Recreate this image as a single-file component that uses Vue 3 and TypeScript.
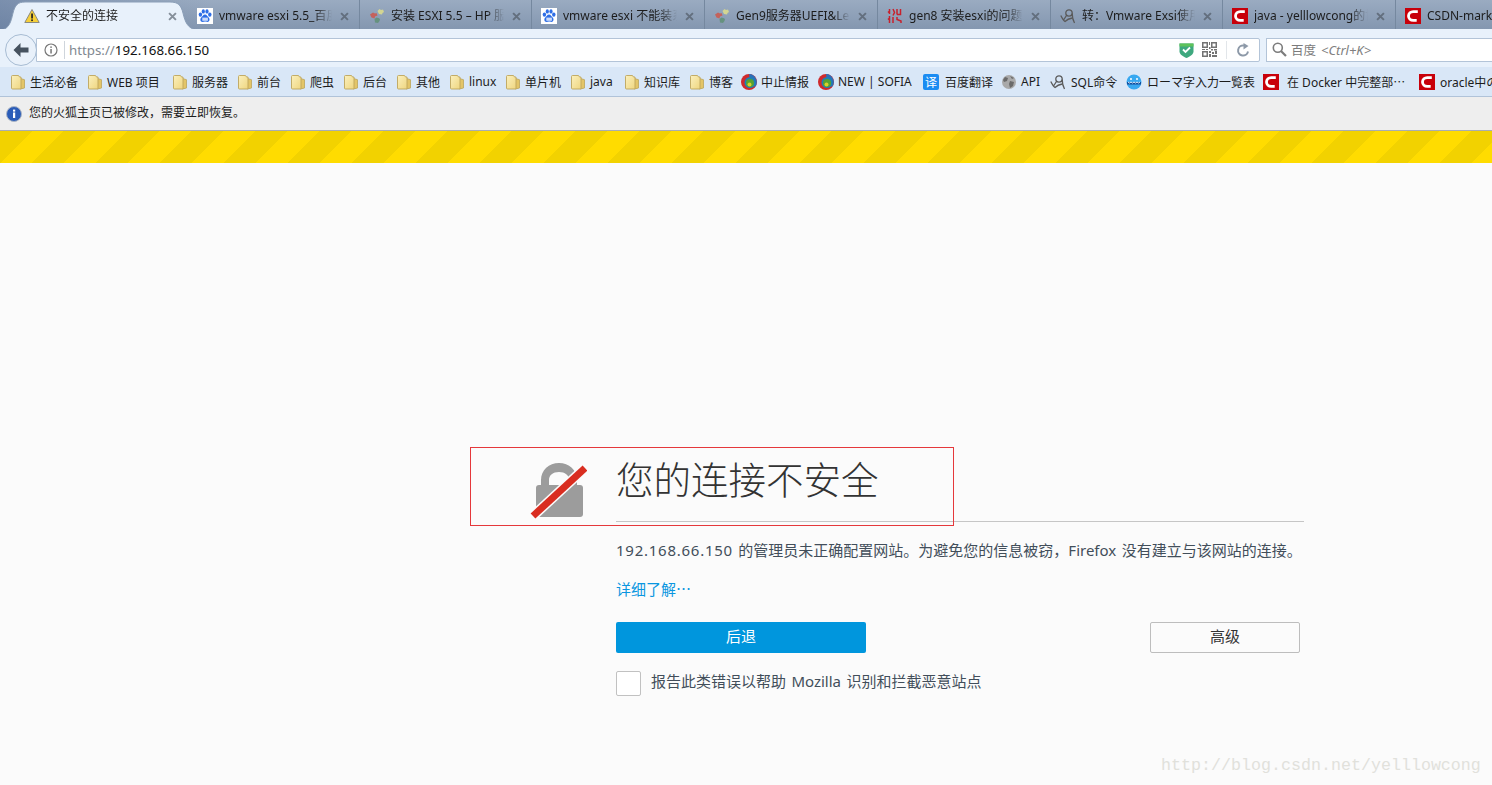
<script setup lang="ts">
interface Tab { icon: string; text: string; width: number }
interface Mark { icon: string; text: string; width: number; gap?: number }

const tabs: Tab[] = [
  { icon: 'baidu', text: 'vmware esxi 5.5_百度搜索', width: 170 },
  { icon: 'puzzle', text: '安装 ESXI 5.5 – HP 服务器', width: 172 },
  { icon: 'baidu', text: 'vmware esxi 不能装系统', width: 173 },
  { icon: 'puzzle', text: 'Gen9服务器UEFI&Legacy', width: 173 },
  { icon: 'redlogo', text: 'gen8 安装esxi的问题解决', width: 173 },
  { icon: 'ink', text: '转：Vmware Exsi使用教程', width: 172 },
  { icon: 'csdn', text: 'java - yelllowcong的博客', width: 173 },
  { icon: 'csdn', text: 'CSDN-markdown编辑器', width: 173 },
]

const marks: Mark[] = [
  { icon: 'folder', text: '生活必备', width: 77 },
  { icon: 'folder', text: 'WEB 项目', width: 85 },
  { icon: 'folder', text: '服务器', width: 65 },
  { icon: 'folder', text: '前台', width: 53 },
  { icon: 'folder', text: '爬虫', width: 53 },
  { icon: 'folder', text: '后台', width: 53 },
  { icon: 'folder', text: '其他', width: 53 },
  { icon: 'folder', text: 'linux', width: 56 },
  { icon: 'folder', text: '单片机', width: 65 },
  { icon: 'folder', text: 'java', width: 54 },
  { icon: 'folder', text: '知识库', width: 65 },
  { icon: 'folder', text: '博客', width: 52 },
  { icon: 'ring', text: '中止情报', width: 77 },
  { icon: 'ring', text: 'NEW | SOFIA', width: 105 },
  { icon: 'trans', text: '百度翻译', width: 78, gap: 6 },
  { icon: 'globe', text: 'API', width: 49 },
  { icon: 'ink', text: 'SQL命令', width: 76, gap: 5 },
  { icon: 'ball', text: 'ローマ字入力一覧表', width: 137, gap: 5 },
  { icon: 'csdn', text: '在 Docker 中完整部⋯', width: 156, gap: 8 },
  { icon: 'csdn', text: 'oracle中の', width: 90, gap: 5 },
]
</script>

<template>
  <div class="window">
    <svg class="defs" width="0" height="0" aria-hidden="true">
      <defs>
        <linearGradient id="fold" x1="0" y1="0" x2="1" y2="1">
          <stop offset="0" stop-color="#fbf0bd" />
          <stop offset="1" stop-color="#efd680" />
        </linearGradient>
        <symbol id="folder" viewBox="0 0 16 16">
          <path d="M10.500 4.500l4 1.200v8.300l-4 1z" fill="#e3c568" stroke="#bda55b" stroke-width=".8" />
          <path d="M1.500 2.500a1 1 0 0 1 1-1h6l1 1.500h1.500v12H2.500a1 1 0 0 1-1-1z" fill="url(#fold)" stroke="#bda55b" stroke-width=".9" />
        </symbol>
        <symbol id="baidu" viewBox="0 0 16 16">
          <rect width="16" height="16" fill="#fff" />
          <g fill="#2e6ee6">
            <ellipse cx="3.400" cy="6.600" rx="1.700" ry="2.200" />
            <ellipse cx="6.300" cy="3.400" rx="1.600" ry="2.200" />
            <ellipse cx="10" cy="3.400" rx="1.600" ry="2.200" />
            <ellipse cx="12.800" cy="6.600" rx="1.700" ry="2.200" />
            <path d="M8 6.600c2 0 2.300 2 3.600 3 1.600 1.300 1.100 4.400-1.300 4.400-1 0-1.500-.4-2.300-.4s-1.400.4-2.400.4c-2.400 0-2.900-3-1.300-4.400 1.400-1 1.600-3 3.700-3z" />
          </g>
          <rect x="5.300" y="9.600" width="5.600" height="3.200" fill="#fff" opacity=".75" />
        </symbol>
        <symbol id="puzzle" viewBox="0 0 16 16">
          <path d="M1 6.500l3-2 2 1 1.500-.5 1 2.500-2.500 1-.5 2-3-1z" fill="#c4625c" />
          <path d="M8.500 3l2-2 1.500 1 2-.5 1 2.500-1.500 1-.5 1.500-3-.5z" fill="#d3d592" />
          <path d="M5.500 11l2-1.500 2 .5 1.500 1-.5 2-1.500 2-3-.5z" fill="#66927f" />
        </symbol>
        <symbol id="redlogo" viewBox="0 0 16 16">
          <g fill="none" stroke="#c8202c" stroke-width="1.500">
            <path d="M2.500 1v5M1 3.500l1.500 1.500M2.500 8v7M1 10.500l1.500 1.500" />
            <path d="M6 1l1.500 3.500L6 7.500M6 9v6" />
            <path d="M10 1v5.500M13.500 1v5.500h-3.500M10 9v2.500l4 1.500v2" />
          </g>
        </symbol>
        <symbol id="ink" viewBox="0 0 16 16">
          <g fill="none" stroke="#5a5a5a" stroke-width="1.300">
            <circle cx="9" cy="5" r="3.200" />
            <path d="M12.200 5.500c0 3 .3 6 2.300 9.500" />
            <path d="M.8 7.500c1 2 2.500 5 4.200 6 2-2 4-3 7.200-3.500" />
            <path d="M6.500 7.500L3.500 12" />
          </g>
        </symbol>
        <symbol id="csdn" viewBox="0 0 16 16">
          <rect width="16" height="16" fill="#c8000a" />
          <path d="M12.800 3.600H8.300C5.600 3.600 3.500 5.500 3.500 8s2.100 4.400 4.800 4.400h3.400" fill="none" stroke="#fff" stroke-width="2.800" />
        </symbol>
        <symbol id="ring" viewBox="0 0 16 16">
          <circle cx="8" cy="8" r="8" fill="#cf2a2c" />
          <path d="M8 0a8 8 0 0 1 6 13L9 8z" fill="#2d6fb8" />
          <circle cx="9" cy="8.500" r="5.500" fill="#1f7fb4" />
          <circle cx="9" cy="9" r="4" fill="#57a232" />
          <circle cx="8.500" cy="10.500" r="2" fill="#d8d02c" />
        </symbol>
        <symbol id="trans" viewBox="0 0 16 16">
          <rect width="16" height="16" rx="2" fill="#1b8cf2" />
          <text x="8" y="12.500" font-size="12" text-anchor="middle" fill="#fff" font-family="'Noto Sans CJK SC', sans-serif">译</text>
        </symbol>
        <symbol id="globe" viewBox="0 0 16 16">
          <circle cx="8" cy="8" r="7" fill="#a9a9a9" />
          <path d="M4 3l3 1-1 3-3 1-1-2zM9 7l4 1-1 4-3 2-1-4zM9 2l4 2-2 1z" fill="#6a6a6a" />
        </symbol>
        <symbol id="ball" viewBox="0 0 16 16">
          <circle cx="8" cy="8" r="7.500" fill="#38a8f0" />
          <path d="M1 8h14v2.500H1z" fill="#124f9e" />
          <path d="M2 8l1.500 1 1.500-1 1.500 1 1.500-1 1.500 1 1.500-1 1.500 1 1.500-1" stroke="#dff1ff" fill="none" />
          <circle cx="5" cy="5" r="1" fill="#fff" />
          <circle cx="11" cy="5" r="1" fill="#fff" />
        </symbol>
        <symbol id="x" viewBox="0 0 10 10">
          <path d="M1.200 1.200l7.600 7.600M8.800 1.200L1.200 8.800" stroke="currentColor" stroke-width="2.200" fill="none" />
        </symbol>
      </defs>
    </svg>

    <div class="tabbar">
      <div class="tab active">
        <svg class="tab-shape" width="198" height="30" viewBox="0 0 198 30" aria-hidden="true">
          <path d="M1 30c8-1 10-8 12-17C15 5 18 2 25 2h145c8 0 11 3 13 11 2 9 5 16 14 17z" fill="#e8f1fb" stroke="#8a9eb7" />
        </svg>
        <svg class="ic warn" width="16" height="16" viewBox="0 0 16 16">
          <path d="M8 1.500L15.200 14.500H.8z" fill="#f6cf38" stroke="#8a8a80" stroke-linejoin="round" />
          <rect x="7.200" y="5.500" width="1.700" height="5" fill="#222" />
          <rect x="7.200" y="11.400" width="1.700" height="1.700" fill="#222" />
        </svg>
        <span class="tab-title">不安全的连接</span>
        <svg class="close" width="9" height="9"><use href="#x" /></svg>
      </div>
      <div v-for="t in tabs" :key="t.text" class="tab" :style="{ width: t.width + 'px' }">
        <svg class="ic" width="16" height="16"><use :href="'#' + t.icon" /></svg>
        <span class="tab-title">{{ t.text }}</span>
        <svg class="close" width="9" height="9"><use href="#x" /></svg>
      </div>
    </div>

    <div class="navbar">
      <div class="urlbar">
        <svg class="info" width="14" height="14" viewBox="0 0 14 14">
          <circle cx="7" cy="7" r="6" fill="none" stroke="#777" stroke-width="1.200" />
          <rect x="6.300" y="6" width="1.500" height="4.500" fill="#777" />
          <rect x="6.300" y="3.400" width="1.500" height="1.500" fill="#777" />
        </svg>
        <span class="sep"></span>
        <span class="url"><span class="scheme">https://</span>192.168.66.150</span>
        <svg class="shield" width="15" height="16" viewBox="0 0 15 16">
          <path d="M.5 1.500h14v8c0 3-3.500 5-7 6.500-3.500-1.500-7-3.500-7-6.500z" fill="#3ea87e" />
          <path d="M.5 1.500h14v3H.5z" fill="#5ec25a" />
          <path d="M4 7.500l2.500 2.500L11 5.500" fill="none" stroke="#fff" stroke-width="1.800" />
        </svg>
        <svg class="qr" width="15" height="15" viewBox="0 0 15 15" fill="#737373">
          <path d="M0 0h6v6H0zM1.500 1.500v3h3v-3zM9 0h6v6H9zM10.500 1.500v3h3v-3zM0 9h6v6H0zM1.500 10.500v3h3v-3z" fill-rule="evenodd" />
          <path d="M7 0h1v3H7zM7 5h1.500v2H7zM0 7h3v1H0zM4 7h2v1H4zM9 7h2v1.500H9zM12 7h3v1.500h-3zM7 9h2v2H7zM10 10h2v2h-2zM13 9h2v3h-2zM7 12h2v3H7zM10 13h5v2h-5z" />
        </svg>
        <span class="sep light"></span>
        <svg class="reload" width="14" height="14" viewBox="0 0 14 14">
          <path d="M12 8.500A5 5 0 1 1 8 2.600" fill="none" stroke="#8d99a8" stroke-width="2" />
          <path d="M7.500 0l5 3-5 3.500z" fill="#8d99a8" />
        </svg>
      </div>
      <div class="backbtn">
        <svg width="16" height="14" viewBox="0 0 16 14">
          <path d="M7.500 0L.5 7l7 7V9.500H15.500v-5H7.500z" fill="#46525f" />
        </svg>
      </div>
      <div class="searchbar">
        <svg width="15" height="15" viewBox="0 0 15 15">
          <circle cx="5.800" cy="5.800" r="4.500" fill="none" stroke="#7c7c7c" stroke-width="1.600" />
          <path d="M9 9l5 5" stroke="#7c7c7c" stroke-width="2.200" />
        </svg>
        <span class="search-name">百度</span>
        <em class="search-key">&lt;Ctrl+K&gt;</em>
      </div>
    </div>

    <div class="bookmarks">
      <div v-for="m in marks" :key="m.text" class="mark" :style="{ width: m.width + 'px', gap: (m.gap ?? 4) + 'px' }">
        <svg class="ic" width="16" height="16"><use :href="'#' + m.icon" /></svg>
        <span>{{ m.text }}</span>
      </div>
    </div>

    <div class="notice">
      <svg class="notice-icon" width="16" height="16" viewBox="0 0 16 16">
        <circle cx="8" cy="8" r="7.500" fill="#2a5cb8" stroke="#aab4c4" />
        <rect x="7" y="6.500" width="2.200" height="5.500" fill="#fff" />
        <rect x="7" y="3.600" width="2.200" height="2" fill="#fff" />
      </svg>
      <span>您的火狐主页已被修改，需要立即恢复。</span>
    </div>

    <div class="stripes"></div>

    <main class="page">
      <div class="error">
        <svg class="lock" width="58" height="58" viewBox="0 0 58 58">
          <path d="M12 26v-8C12 8 20 1 30 1s18 7 18 17v8h-8v-8c0-5-4-8-10-8s-10 3-10 8v8z" fill="#9c9c9c" />
          <rect x="7" y="23" width="47" height="32" rx="3" fill="#9c9c9c" />
          <path d="M56 6L4 54" stroke="#fbfbfb" stroke-width="10" />
          <path d="M56 6L4 54" stroke="#d92d20" stroke-width="7" />
        </svg>
        <div class="content">
          <h1 class="title">您的连接不安全</h1>
          <p class="desc"><span class="ip">192.168.66.150</span> 的管理员未正确配置网站。为避免您的信息被窃，Firefox 没有建立与该网站的连接。</p>
          <a class="more">详细了解⋯</a>
          <div class="actions">
            <button class="btn primary">后退</button>
            <button class="btn plain">高级</button>
          </div>
          <label class="report">
            <span class="check"></span>
            <span class="report-text">报告此类错误以帮助 Mozilla 识别和拦截恶意站点</span>
          </label>
        </div>
      </div>
      <div class="redbox"></div>
      <div class="watermark">http://blog.csdn.net/yelllowcong</div>
    </main>
  </div>
</template>

<style>
html, body { margin: 0; padding: 0; overflow: hidden; }
</style>

<style scoped>
.window {
  width: 1492px;
  height: 785px;
  overflow: hidden;
  display: flex;
  flex-direction: column;
  font-family: "Noto Sans", "Noto Sans CJK SC", sans-serif;
  color: #1c1c1c;
  background: #fbfbfb;
}
.defs { position: absolute; }
.ic { flex: none; }

.tabbar {
  height: 29px;
  flex: none;
  display: flex;
  overflow: hidden;
  background:
    linear-gradient(90deg, rgba(85, 110, 150, .45) 0, rgba(85, 110, 150, 0) 14%),
    linear-gradient(180deg, #9aabc1 0, #8497b0 100%);
  border-bottom: 1px solid #74879f;
}
.tab {
  position: relative;
  flex: none;
  height: 29px;
  box-sizing: border-box;
  display: flex;
  align-items: center;
  gap: 6px;
  padding: 2px 8px 0 9px;
  border-right: 1px solid #75889f;
  font-size: 12px;
  line-height: 16px;
}
.tab:nth-child(2) { padding-left: 7px; }
.tab:last-child { border-right: none; }
.tab.active {
  width: 190px;
  padding-left: 24px;
  padding-right: 11px;
  border-right: none;
  z-index: 1;
}
.tab-shape { position: absolute; left: 0; top: 0; }
.warn, .tab.active .tab-title, .tab.active .close { position: relative; }
.tab-title {
  flex: 1;
  min-width: 0;
  overflow: hidden;
  white-space: nowrap;
  -webkit-mask-image: linear-gradient(90deg, #000 85%, transparent);
  mask-image: linear-gradient(90deg, #000 85%, transparent);
}
.close {
  flex: none;
  margin: 1px 2px 0;
  color: #636f7e;
}
.tab.active .close { color: #858f9a; }

.navbar {
  position: relative;
  flex: none;
  height: 38px;
  display: flex;
  align-items: center;
  gap: 6px;
  padding: 3px 0 0 36px;
  margin-top: -1px;
  background: #e8f1fb;
  box-sizing: border-box;
  z-index: 2;
}
.urlbar {
  flex: none;
  width: 1224px;
  height: 24px;
  box-sizing: border-box;
  display: flex;
  align-items: center;
  background: #fff;
  border: 1px solid #b3c4d8;
  border-radius: 0 2px 2px 0;
  padding-left: 7px;
  font-size: 13.3px;
}
.info { flex: none; }
.sep { flex: none; width: 1px; height: 18px; background: #cfd5dc; margin: 0 4px 0 6px; }
.url { flex: 1; color: #111; white-space: nowrap; }
.scheme { color: #808890; }
.shield { flex: none; margin-right: 8px; }
.qr { flex: none; }
.sep.light { margin: 0 9px 0 9px; background: #e2e6ea; }
.reload { flex: none; margin-right: 9px; }
.backbtn {
  position: absolute;
  left: 5px;
  top: 5px;
  width: 32px;
  height: 32px;
  box-sizing: border-box;
  border: 1px solid #a7bcd3;
  border-radius: 50%;
  background: #e9f1fa;
  display: flex;
  align-items: center;
  justify-content: center;
}
.searchbar {
  flex: none;
  width: 240px;
  height: 24px;
  box-sizing: border-box;
  display: flex;
  align-items: center;
  gap: 4px;
  background: #fff;
  border: 1px solid #b3c4d8;
  padding-left: 5px;
  font-size: 12.5px;
  color: #7b7b7b;
}
.search-key { margin-left: 1px; color: #808080; font-size: 13px; }

.bookmarks {
  flex: none;
  height: 30px;
  box-sizing: border-box;
  display: flex;
  align-items: center;
  padding-left: 10px;
  overflow: hidden;
  background: #d9e7f7;
  border-bottom: 1px solid #b0c3d9;
  font-size: 12px;
  white-space: nowrap;
}
.mark { flex: none; display: flex; align-items: center; }

.notice {
  flex: none;
  height: 34px;
  box-sizing: border-box;
  display: flex;
  align-items: center;
  gap: 7px;
  padding: 0 0 3px 6px;
  background: #eeeeee;
  border-bottom: 1px solid #a9adb2;
  font-size: 12px;
}
.notice-icon { margin-top: 4px; }
.stripes {
  flex: none;
  height: 32px;
  background: repeating-linear-gradient(135deg, #f2d200 0, #f2d200 22.63px, #ffdc00 22.63px, #ffdc00 45.25px);
}

.page {
  position: relative;
  flex: 1;
  min-height: 0;
  background: #fbfbfb;
}
.error {
  display: grid;
  grid-template-columns: 58px 688px;
  column-gap: 29px;
  padding: 290px 0 0 529px;
  align-items: start;
  color: #424e5a;
}
.lock { margin-top: 9px; }
.title {
  margin: -3px 0 0;
  height: 72px;
  box-sizing: border-box;
  font-weight: 300;
  font-size: 37.5px;
  line-height: 56px;
  color: #333;
  border-bottom: 1px solid #c6c6c6;
  font-family: "Noto Sans CJK SC", "Noto Sans", sans-serif;
  white-space: nowrap;
}
.desc {
  margin: 17px 0 0;
  font-size: 15px;
  line-height: 22px;
  word-spacing: 1.5px;
  white-space: nowrap;
}
.ip { letter-spacing: .75px; }
.more {
  display: block;
  margin-top: 17px;
  font-size: 15px;
  line-height: 22px;
  color: #0996e0;
}
.actions {
  display: flex;
  justify-content: space-between;
  width: 684px;
  margin-top: 22px;
}
.btn {
  height: 31px;
  box-sizing: border-box;
  border-radius: 2px;
  font-family: inherit;
  font-size: 15px;
  padding: 0 0 5px;
}
.primary { width: 250px; border: none; background: #0096dd; color: #fff; }
.plain { width: 150px; border: 1px solid #bdbdbd; background: #fbfbfb; color: #333; }
.report {
  display: flex;
  align-items: center;
  gap: 10px;
  margin-top: 17px;
  font-size: 15px;
  word-spacing: 1.5px;
}
.report-text { padding-bottom: 5px; }
.check {
  width: 25px;
  height: 25px;
  box-sizing: border-box;
  border: 1px solid #c1c1c1;
  border-radius: 2px;
  background: #fff;
}
.redbox {
  position: absolute;
  left: 470px;
  top: 284px;
  width: 484px;
  height: 79px;
  box-sizing: border-box;
  border: 1px solid #e5383b;
  pointer-events: none;
}
.watermark {
  position: absolute;
  left: 1161px;
  top: 593px;
  font-family: "Liberation Mono", monospace;
  font-size: 16.67px;
  line-height: 20px;
  color: #e1e1db;
  white-space: nowrap;
}
</style>
